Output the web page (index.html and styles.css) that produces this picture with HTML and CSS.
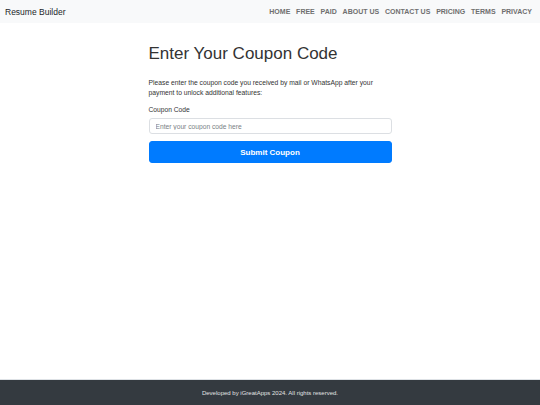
FILE: index.html
```html
<!DOCTYPE html>
<html lang="en">
<head>
<meta charset="utf-8">
<title>Resume Builder</title>
<link rel="stylesheet" href="styles.css">
</head>
<body>
<div class="page">
  <nav class="navbar">
    <a class="brand" href="#">Resume Builder</a>
    <ul class="nav">
      <li><a href="#">HOME</a></li>
      <li><a href="#">FREE</a></li>
      <li><a href="#">PAID</a></li>
      <li><a href="#">ABOUT US</a></li>
      <li><a href="#">CONTACT US</a></li>
      <li><a href="#">PRICING</a></li>
      <li><a href="#">TERMS</a></li>
      <li><a href="#">PRIVACY</a></li>
    </ul>
  </nav>
  <main class="main">
    <div class="container">
      <h1 class="title">Enter Your Coupon Code</h1>
      <p class="lead">Please enter the coupon code you received by mail or WhatsApp after your payment to unlock additional features:</p>
      <form class="form">
        <label class="label" for="coupon">Coupon Code</label>
        <input class="input" id="coupon" type="text" placeholder="Enter your coupon code here">
        <button class="btn" type="button">Submit Coupon</button>
      </form>
    </div>
  </main>
  <footer class="footer">Developed by iGreatApps 2024. All rights reserved.</footer>
</div>
</body>
</html>
```
FILE: styles.css
```css
* { box-sizing: border-box; }
html, body { margin: 0; padding: 0; }
body {
  font-family: "Liberation Sans", Arial, sans-serif;
  color: #333;
  background: #fff;
}
.page {
  min-height: 100vh;
  display: flex;
  flex-direction: column;
}
.navbar {
  height: 23px;
  background: #f8f9fa;
  display: flex;
  align-items: center;
  justify-content: space-between;
  padding: 0 8px 0 5px;
  line-height: 10px;
}
.brand {
  font-size: 8.5px;
  color: #212529;
  text-decoration: none;
}
.nav {
  list-style: none;
  margin: 0;
  padding: 0;
  display: flex;
  gap: 5.8px;
  font-size: 7px;
}
.nav a {
  font-size: 7px;
  font-weight: bold;
  color: #6f6f6f;
  text-decoration: none;
}
.main {
  flex: 1;
}
.container {
  width: 243px;
  margin: 0 auto;
  padding-top: 19px;
}
.title {
  margin: 0 0 12px;
  font-size: 17px;
  font-weight: 400;
  line-height: 24px;
  color: #333;
}
.lead {
  margin: 0 0 7px;
  font-size: 6.75px;
  line-height: 10px;
}
.form {
  display: flex;
  flex-direction: column;
}
.label {
  font-size: 6.7px;
  line-height: 10px;
  margin-bottom: 3px;
}
.input {
  height: 16px;
  border: 1px solid #dcdfe3;
  border-radius: 3px;
  padding: 0 6px;
  font-size: 6.7px;
  font-family: inherit;
  color: #495057;
  margin: 0 0 7px;
}
.input::placeholder { color: #7a7f85; }
.btn {
  height: 22px;
  border: 1px solid #007bff;
  border-radius: 3px;
  background: #007bff;
  color: #fff;
  font-size: 8px;
  font-weight: bold;
  font-family: inherit;
}
.footer {
  height: 26px;
  background: #343a40;
  border-top: 1px solid #dee2e6;
  color: #e2e2e2;
  font-size: 6px;
  display: flex;
  align-items: center;
  justify-content: center;
}
```
